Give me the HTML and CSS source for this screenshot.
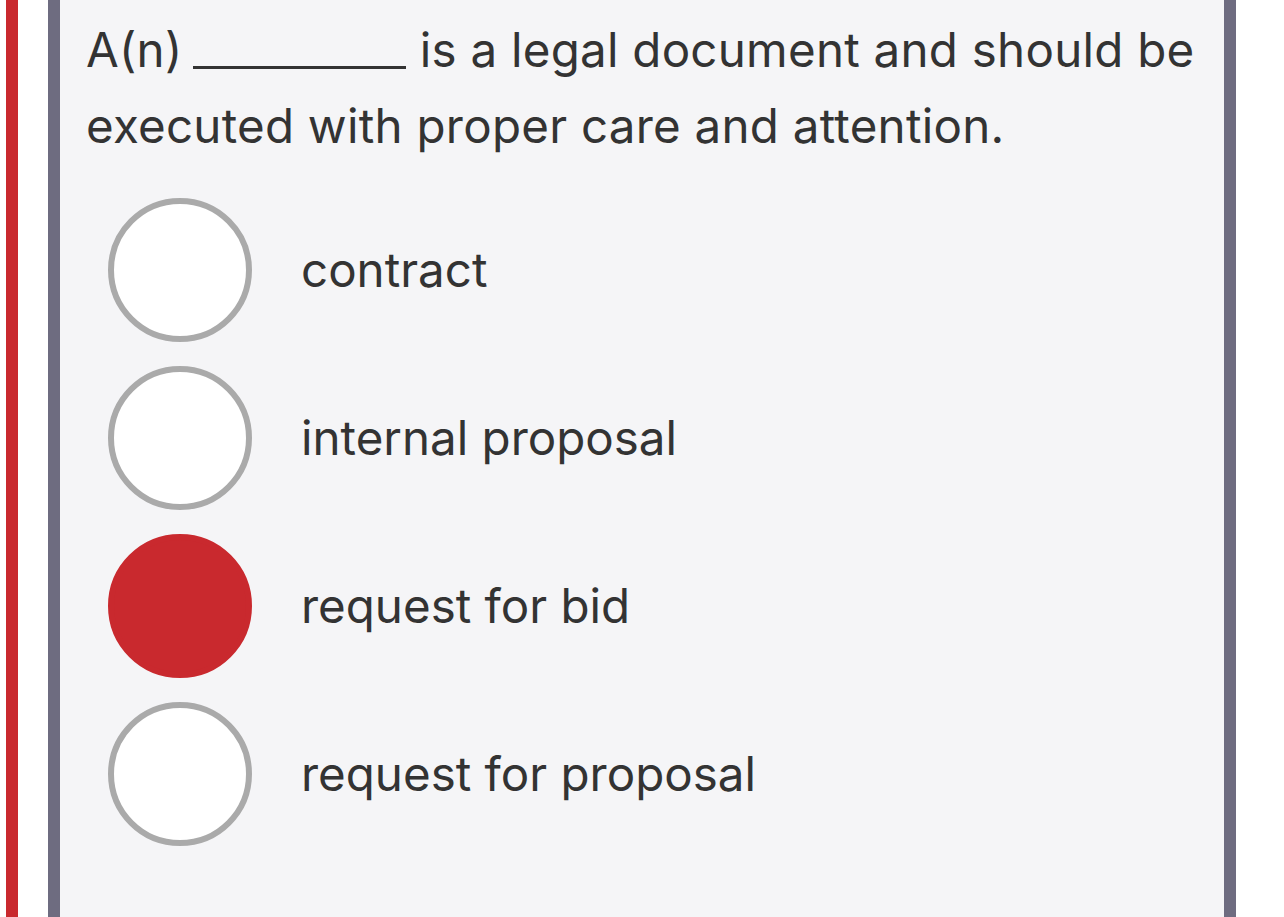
FILE: index.html
```html
<!DOCTYPE html>
<html>
<head>
<meta charset="utf-8">
<link rel="stylesheet" href="styles.css">
</head>
<body>
<div class="page">
  <div class="accent"></div>
  <div class="card">
    <p class="question">A(n) <span class="blank"></span> is a legal document and should be executed with proper care and attention.</p>
    <div class="options">
      <div class="option"><span class="radio"></span><span class="label">contract</span></div>
      <div class="option"><span class="radio"></span><span class="label">internal proposal</span></div>
      <div class="option"><span class="radio selected"></span><span class="label">request for bid</span></div>
      <div class="option"><span class="radio"></span><span class="label">request for proposal</span></div>
    </div>
  </div>
</div>
</body>
</html>
```
FILE: styles.css
```css
html, body {
  margin: 0;
  padding: 0;
  background: #ffffff;
}
.page {
  display: flex;
  height: 917px;
  padding-left: 6px;
  overflow: hidden;
}
.accent {
  width: 12px;
  background: #c9292e;
  margin-right: 30px;
}
.card {
  width: 1188px;
  box-sizing: border-box;
  background: #f5f5f7;
  border-left: 12px solid #6e6c80;
  border-right: 12px solid #6e6c80;
  padding: 12px 0 0 26px;
  font-family: Inter, "Noto Sans", sans-serif;
  color: #333333;
}
.question {
  margin: 0;
  font-size: 47.5px;
  line-height: 76px;
  letter-spacing: 0.25px;
  padding-right: 4px;
}
.blank {
  display: inline-block;
  width: 213px;
  height: 3px;
  margin-left: -3px;
  background: #333333;
  vertical-align: baseline;
  margin-bottom: -2px;
}
.options {
  display: flex;
  flex-direction: column;
  gap: 24px;
  margin-top: 34px;
  padding-left: 22px;
}
.option {
  display: flex;
  align-items: center;
  gap: 49px;
}
.radio {
  width: 132px;
  height: 132px;
  border-radius: 50%;
  border: 6px solid #aaaaaa;
  background: #ffffff;
  flex: none;
}
.radio.selected {
  border-color: #c9292e;
  background: #c9292e;
}
.label {
  font-size: 47.5px;
  line-height: 56px;
}
```
